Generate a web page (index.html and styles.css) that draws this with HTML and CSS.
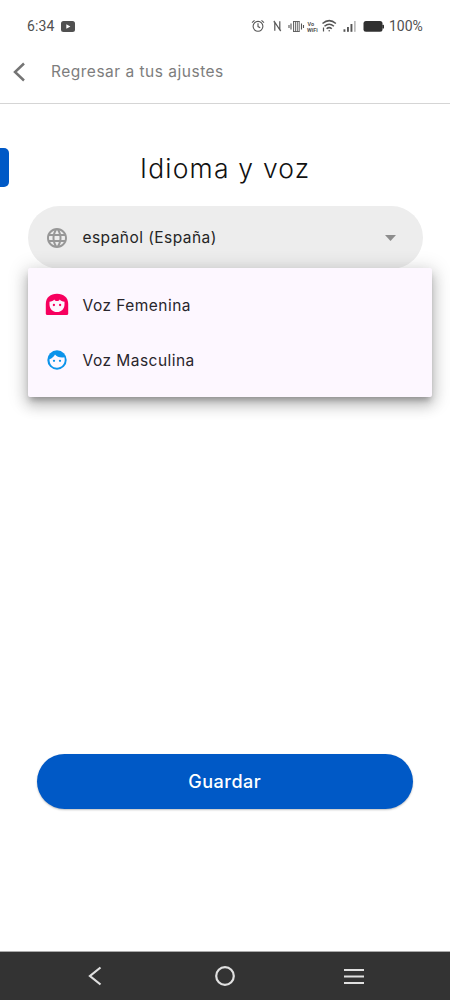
FILE: index.html
```html
<!DOCTYPE html>
<html lang="es">
<head>
<meta charset="utf-8">
<title>Idioma y voz</title>
<link rel="stylesheet" href="styles.css">
</head>
<body>
<div class="screen">
  <div class="status">
    <span class="clock">6:34</span>
    <svg class="youtube" width="14" height="11" viewBox="0 0 14 11"><rect width="14" height="11" rx="2.5" fill="#505050"/><path d="M5.3 3.2v4.6L9.4 5.5z" fill="#fff"/></svg>
    <svg class="system-icons" width="136" height="16" viewBox="0 0 136 16" fill="none" stroke="#555" stroke-width="1.1">
      <circle cx="8" cy="8.3" r="4.9"/><path d="M8 5.200v3.400l2.200 1.200M2 4.600 4.500 2.400M14 4.600 11.500 2.400"/>
      <path d="M24.800 12.700V4.200l5 7.600V3.300M24.800 4.200l-1.200-.7M29.800 11.800l1.200.8" stroke-width="1.200"/>
      <path d="M39 7v3M41 5.500v6M51.500 5.500v6M53.500 7v3"/><path d="M43.500 3.500v10M45.400 3.500v10M47.300 3.500v10M49.200 3.500v10M43 3.500h6.700M43 13.500h6.700" stroke-width=".9"/>
      <text x="57.500" y="8" class="vo">Vo</text><text x="57" y="14" class="vo">WiFi</text>
      <path d="M72.500 5.500c4.200-3.600 9.200-3.600 13.400 0M74.500 8.200c3-2.600 6.400-2.600 9.400 0M76.600 10.800c1.700-1.500 3.500-1.500 5.200 0" stroke-width="1.500"/><circle cx="79.200" cy="12.800" r=".8" fill="#555" stroke="none"/><path d="M73.500 9.500v4" stroke-width="1.200"/>
      <g stroke="none" fill="#555"><rect x="93.500" y="11.300" width="1.900" height="2.500"/><rect x="97" y="9" width="1.900" height="4.800"/><rect x="100.500" y="6" width="1.900" height="7.800"/><rect x="104" y="3" width="1.700" height="10.800" fill="#bbb"/><rect x="113.500" y="3" width="19" height="10.800" rx="2.500" fill="#303030"/><rect x="132.300" y="6.700" width="1.700" height="3.800" rx=".6" fill="#303030"/></g>
    </svg>
    <span class="percent">100%</span>
  </div>
  <header class="header">
    <svg width="14" height="20" viewBox="0 0 14 20" fill="none" stroke="#747474" stroke-width="2.500"><path d="M12 1.500 3 10l9 8.500"/></svg>
    <span class="back-label">Regresar a tus ajustes</span>
  </header>
  <main class="content">
    <div class="title-row"><span class="side-tab"></span><h1 class="title">Idioma y voz</h1></div>
    <div class="select">
      <svg class="globe" width="24" height="24" viewBox="0 0 24 24" fill="#979797"><path d="M11.990 2C6.470 2 2 6.480 2 12s4.470 10 9.990 10C17.520 22 22 17.520 22 12S17.520 2 11.990 2zm6.930 6h-2.950a15.650 15.650 0 0 0-1.380-3.560A8.030 8.030 0 0 1 18.920 8zM12 4.040c.83 1.200 1.480 2.530 1.910 3.960h-3.820c.43-1.430 1.080-2.760 1.910-3.960zM4.260 14C4.100 13.360 4 12.690 4 12s.1-1.360.26-2h3.380c-.08.660-.14 1.320-.14 2s.06 1.340.14 2H4.260zm.82 2h2.950c.32 1.250.78 2.450 1.380 3.560A7.990 7.990 0 0 1 5.080 16zm2.950-8H5.080a7.990 7.990 0 0 1 4.330-3.560A15.650 15.650 0 0 0 8.030 8zM12 19.960c-.83-1.200-1.480-2.530-1.910-3.960h3.820c-.43 1.430-1.080 2.760-1.910 3.960zM14.340 14H9.660c-.09-.66-.16-1.320-.16-2s.07-1.350.16-2h4.680c.09.650.16 1.320.16 2s-.07 1.340-.16 2zm.25 5.560c.6-1.110 1.060-2.310 1.380-3.560h2.950a8.030 8.030 0 0 1-4.330 3.560zM16.360 14c.08-.66.14-1.320.14-2s-.06-1.340-.14-2h3.380c.16.640.26 1.310.26 2s-.1 1.360-.26 2h-3.380z"/></svg>
      <span class="language">español (España)</span>
      <svg class="caret" width="11" height="6" viewBox="0 0 11 6"><path d="M0 0h11L5.500 6z" fill="#8d8d8d"/></svg>
    </div>
    <div class="menu">
      <div class="option">
        <svg width="24" height="24" viewBox="0 0 24 24"><path d="M.8 20.500V11C.8 4.500 5.500.8 12 .8S23.200 4.500 23.200 11v9.500q0 1.500-1.500 1.500H2.300Q.8 22 .8 20.500z" fill="#f7005e"/><path d="M4.500 8.700c2.100-.1 3.800-.8 4.700-2.200.6 1 1.600 1.500 2.800 1.500s2.200-.5 2.800-1.500c.9 1.400 2.600 2.100 4.700 2.200v2.700c0 4.400-3.200 7.600-7.500 7.600s-7.500-3.200-7.500-7.600z" fill="#fdf7ff"/><circle cx="8.900" cy="12" r="1.150" fill="#f7005e"/><circle cx="15.100" cy="12" r="1.150" fill="#f7005e"/></svg>
        <span>Voz Femenina</span>
      </div>
      <div class="option">
        <svg width="24" height="24" viewBox="0 0 24 24"><circle cx="12" cy="12" r="9.700" fill="#0b93ea"/><path d="M4.500 11.200C7 10.300 9 8.700 10 6.500c1.800 2.200 5.200 3.500 9.300 2.800.3.900.4 1.700.4 2.700 0 4.300-3.400 7.700-7.700 7.700S4.300 16.300 4.500 11.200z" fill="#fdf7ff"/><circle cx="9" cy="12.800" r="1.150" fill="#0b93ea"/><circle cx="15" cy="12.800" r="1.150" fill="#0b93ea"/></svg>
        <span>Voz Masculina</span>
      </div>
    </div>
    <button class="save">Guardar</button>
  </main>
  <nav class="navbar">
    <svg width="16" height="20" viewBox="0 0 16 20" fill="none" stroke="#e0e0e0" stroke-width="2.200"><path d="M14.500 1.500 4 10l10.500 8.500"/></svg>
    <svg class="home" width="20" height="20" viewBox="0 0 20 20" fill="none" stroke="#e0e0e0" stroke-width="2.200"><circle cx="10" cy="10" r="8.800"/></svg>
    <svg width="20" height="20" viewBox="0 0 20 20" fill="none" stroke="#e0e0e0" stroke-width="2.200"><path d="M0 4h20M0 10.500h20M0 17h20"/></svg>
  </nav>
</div>
</body>
</html>
```
FILE: styles.css
```css
* { box-sizing: border-box; }
body { margin: 0; background: #fff; font-family: Inter, "Liberation Sans", sans-serif; }
.screen { width: 450px; height: 1000px; display: flex; flex-direction: column; overflow: hidden; }
.screen svg { display: block; flex: none; }
.status { height: 52px; padding: 0 27px; display: flex; align-items: center; font-family: Roboto, sans-serif; font-size: 14px; color: #505050; white-space: nowrap; }
.clock { width: 34px; letter-spacing: .1px; }
.system-icons { margin-left: auto; }
.percent { width: 34px; margin-left: 3px; font-size: 14px; }
.vo { font: bold 5.5px Roboto, sans-serif; fill: #555; stroke: none; }
.header { height: 52px; padding: 0 12px 12px; display: flex; align-items: center; border-bottom: 1px solid #d5d5d5; color: #7d7d7d; font-size: 15.5px; }
.back-label { margin-left: 25px; letter-spacing: .5px; }
.content { flex: 1; display: flex; flex-direction: column; padding: 44px 18px 0 0; }
.title-row { display: flex; align-items: center; height: 39px; }
.side-tab { width: 9px; height: 39px; border-radius: 0 5px 5px 0; background: #0059c6; }
.title { margin: 0 0 0 131px; font-size: 26.5px; font-weight: 350; color: #111; letter-spacing: 1.2px; white-space: nowrap; }
.select { height: 63px; width: 395px; margin: 18.5px 0 0 27.5px; padding: 1px 26.5px 0 18px; display: flex; align-items: center; border-radius: 32px; background: #ededed; }
.globe { margin-left: -.5px; }
.language { margin-left: 13.5px; font-size: 15.5px; color: #252525; letter-spacing: .45px; }
.caret { margin-left: auto; }
.menu { position: relative; height: 129px; width: 404.5px; margin: -1px 0 0 27.5px; padding: 10px 17.500px; background: #fdf7ff; border-radius: 2px; box-shadow: 0 5px 6px -2px rgba(0,0,0,.26), 0 8px 14px 1px rgba(0,0,0,.16), 0 3px 18px 4px rgba(0,0,0,.13); }
.option { height: 55px; display: flex; align-items: center; gap: 13.5px; font-size: 15.5px; color: #29252c; letter-spacing: .47px; }
.save { width: 376.5px; height: 55px; margin: 357.5px 0 0 36.5px; border: 0; border-radius: 28px; background: #0059c6; box-shadow: 0 1px 2px rgba(0,0,0,.25); color: #fff; font: 500 18px Inter, sans-serif; letter-spacing: .5px; }
.navbar { height: 49px; padding: 0 86px; display: flex; align-items: center; justify-content: space-between; background: #333; border-top: 1px solid #aaa; }
.home { margin-left: 4px; }
```
